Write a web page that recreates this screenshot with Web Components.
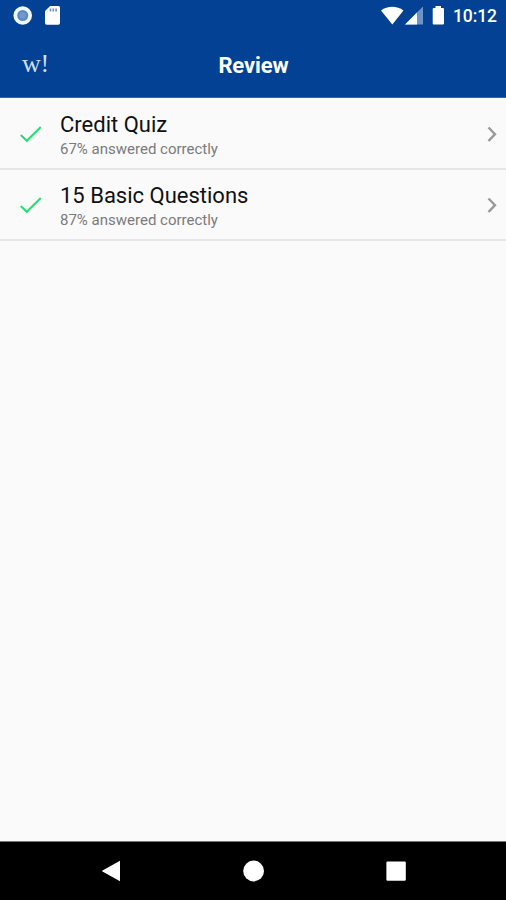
<!DOCTYPE html>
<html lang="en"><head><meta charset="utf-8"><title>Review</title>
<style>html,body{margin:0;height:100%;background:#fafafa;font-family:Roboto,"Noto Sans",sans-serif}</style></head>
<body>
<review-screen></review-screen>
<script>
const define = (name, html) => customElements.define(name, class extends HTMLElement {
  constructor() {
    super();
    const t = document.createElement('template');
    t.innerHTML = html;
    this.attachShadow({mode: 'open'}).append(t.content.cloneNode(true));
  }
});

define('status-bar', `<style>
:host{display:flex;align-items:center;height:32px;padding:0 9px 0 12px;box-sizing:border-box;color:#fff}
svg{display:block;flex:none}
.sd{margin-left:10px}.gap{flex:1}.time{font-size:17.5px;line-height:34px;font-weight:500;width:44px;white-space:nowrap;margin-left:8px;letter-spacing:-.1px}
</style>
<svg width="22" height="32"><circle cx="10.700" cy="15.500" r="9.300" fill="#f3f7fd"/><circle cx="10.700" cy="15.500" r="5.500" fill="#5b8bc6"/><circle cx="10.700" cy="15.500" r="3.200" fill="#7398c9"/></svg>
<svg class="sd" width="18" height="32"><path d="M6.200 6H14.500Q16 6 16 7.500V23Q16 24.700 14.300 24.700H2.700Q1 24.700 1 23V11Z" fill="#fff"/><path d="M6.500 8.500v3M9.300 8.500v3M12.100 8.500v3" stroke="#6c8fc2" stroke-width="1.600"/></svg>
<span class="gap"></span>
<svg width="64" height="32"><path d="M0 10.500C6.500 5.500 16 5.500 22.500 10.500L11.300 24.500Z" fill="#fff"/><path d="M42 6.500V24.500H24Z" fill="#6d94c8"/><path d="M36 12.500V24.500H24Z" fill="#fff"/><path d="M54.500 6H60V8H62Q63 8 63 9V23.500Q63 24.500 62 24.500H52.700Q51.700 24.500 51.700 23.500V9Q51.700 8 52.700 8H54.500Z" fill="#fff"/></svg>
<span class="time"><slot></slot></span>`);

define('title-bar', `<style>
:host{display:grid;grid-template-columns:80px 1fr 80px;height:66px;box-sizing:border-box;color:#fff;border-bottom:1px solid #3c5fa6}
.logo{font:26px/60px "Liberation Serif",serif;color:#cfe0f5;padding-left:22px;letter-spacing:-.3px;height:63px;margin-top:2px;box-sizing:border-box}
h1{margin:0;text-align:center;font-size:22px;line-height:68px;height:65px;font-weight:700;letter-spacing:-.1px;padding-left:1px}
</style><span class="logo"><slot name="logo"></slot></span><h1><slot></slot></h1>`);

define('quiz-row', `<style>
:host{display:flex;align-items:center;height:71px;box-sizing:border-box;border-bottom:2px solid #e6e6e6;padding:0 9px 0 20px}
svg{display:block;flex:none}.text{flex:1;margin-left:18px;padding-top:4px}
.name{font-size:22px;line-height:27px;color:#111;white-space:nowrap}
.score{font-size:15px;line-height:22px;color:#7b7b7b;white-space:nowrap}
</style>
<svg width="22" height="18"><path d="M.8 10L6.800 15.800L20.800 2" fill="none" stroke="#23df70" stroke-width="2"/></svg>
<div class="text"><div class="name"><slot></slot></div><div class="score"><slot name="score"></slot></div></div>
<svg width="11" height="18"><path d="M2.500 2.500L9 9.200L2.500 16" fill="none" stroke="#999" stroke-width="2.400"/></svg>`);

define('nav-bar', `<style>
:host{display:flex;justify-content:space-between;align-items:center;height:59px;padding:0 100px 0 102px;box-sizing:border-box;background:#000;border-top:1px solid #777}
svg{display:block}</style>
<svg width="20" height="22"><path d="M18 .8V21.200L.5 11.600Q-.1 11.100 .5 10.600Z" fill="#fff"/></svg>
<svg width="22" height="22"><circle cx="10.600" cy="11" r="10.400" fill="#fff"/></svg>
<svg width="20" height="22"><rect x=".4" y="1.500" width="19.400" height="19.200" rx="1.200" fill="#fff"/></svg>`);

define('review-screen', `<style>
:host{display:flex;flex-direction:column;height:900px;background:#fafafa}
header{background:#024194}main{flex:1;padding-top:1px}
</style>
<header><status-bar>10:12</status-bar><title-bar><span slot="logo">w!</span>Review</title-bar></header>
<main>
<quiz-row>Credit Quiz<span slot="score">67% answered correctly</span></quiz-row>
<quiz-row>15 Basic Questions<span slot="score">87% answered correctly</span></quiz-row>
</main>
<nav-bar></nav-bar>`);
</script>
</body></html>
